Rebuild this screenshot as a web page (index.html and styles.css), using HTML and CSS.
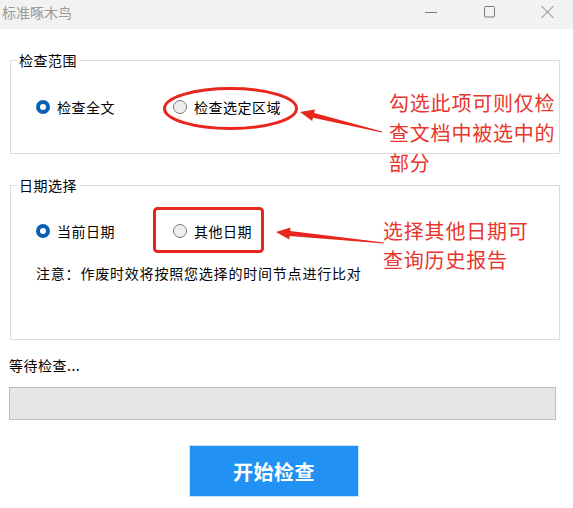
FILE: index.html
```html
<!DOCTYPE html>
<html lang="zh-CN">
<head>
  <meta charset="UTF-8" />
  <meta name="viewport" content="width=device-width, initial-scale=1.0"/>
  <title>标准啄木鸟</title>
  <link rel="stylesheet" href="styles.css">
</head>
<body>

  <div class="window">
    <div class="titlebar">
      <span class="title">标准啄木鸟</span>
      <div class="win-controls">
        <svg class="win-btn" width="14" height="14" viewBox="0 0 14 14"><path d="M1 7.5h12" stroke="#7a7a7a" stroke-width="1"/></svg>
        <svg class="win-btn" width="14" height="14" viewBox="0 0 14 14"><rect x="2.5" y="1.5" width="10" height="10.5" rx="1" fill="none" stroke="#7a7a7a" stroke-width="1"/></svg>
        <svg class="win-btn" width="14" height="14" viewBox="0 0 14 14"><path d="M1.5 1l12 12M13.5 1l-12 12" stroke="#7a7a7a" stroke-width="1"/></svg>
      </div>
    </div>

    <div class="content">
      <fieldset class="group group-range">
        <legend>检查范围</legend>
        <div class="group-body">
          <div class="options">
            <label class="option"><span class="radio checked"></span>检查全文</label>
            <label class="option"><span class="radio"></span>检查选定区域</label>
          </div>
        </div>
      </fieldset>

      <fieldset class="group group-date">
        <legend>日期选择</legend>
        <div class="group-body">
          <div class="options">
            <label class="option"><span class="radio checked"></span>当前日期</label>
            <label class="option"><span class="radio"></span>其他日期</label>
          </div>
          <p class="hint">注意：作废时效将按照您选择的时间节点进行比对</p>
        </div>
      </fieldset>

      <div class="status">等待检查...</div>
      <div class="progress"></div>
      <button class="start">开始检查</button>
    </div>

    <!-- annotation marks drawn over the dialog -->
    <svg class="marks" width="573" height="508" viewBox="0 0 573 508">
      <ellipse cx="230.5" cy="108.5" rx="66" ry="20" fill="none" stroke="#e8261e" stroke-width="3"/>
      <rect x="154.5" y="208.5" width="108" height="43" rx="3" fill="none" stroke="#e8261e" stroke-width="3"/>
      <polygon fill="#e8261e" points="300,112 315,109.5 314.2,112.9 382.1,131.5 381.9,132.5 313,117.7 312.2,121.1"/>
      <polygon fill="#e8261e" points="276,232 290.5,227.4 290.2,230.9 384,242.5 384,243.5 289.6,235.9 289.3,239.4"/>
    </svg>
    <div class="note note-range">勾选此项可则仅检<br>查文档中被选中的<br>部分</div>
    <div class="note note-date">选择其他日期可<br>查询历史报告</div>
  </div>

</body>
</html>
```

FILE: styles.css
```css
body {
  margin: 0;
  background: #fff;
  font-family: "Noto Sans CJK SC", "Microsoft YaHei", sans-serif;
  color: #000;
}
.window {
  position: relative;
  width: 573px;
  height: 508px;
  overflow: hidden;
  background: #fff;
}
.titlebar {
  height: 29px;
  background: #f2f2f2;
  display: flex;
  align-items: center;
  justify-content: space-between;
}
.title {
  font-size: 14px;
  color: #999;
  margin-left: 2px;
  margin-top: -5px;
}
.win-controls {
  display: flex;
  gap: 44px;
  margin-right: 19px;
  margin-top: -6px;
}
.win-btn {
  display: block;
}
.content {
  padding-top: 21px;
}
.group {
  margin: 0 13px 0 10px;
  border: 1px solid #dcdcdc;
  padding: 0;
  min-width: 0;
}
.group legend {
  font-size: 14px;
  line-height: 20px;
  padding: 0 2px;
  margin-left: 6px;
  letter-spacing: 0.5px;
}
.group-body {
  padding-left: 25px;
}
.group-range .group-body {
  padding-top: 27px;
  padding-bottom: 36px;
}
.group-date {
  margin-top: 21px;
}
.group-date .group-body {
  padding-top: 26px;
}
.options {
  display: flex;
}
.option {
  width: 137px;
  flex: none;
  display: flex;
  align-items: center;
  gap: 7px;
  font-size: 14px;
  line-height: 20px;
  letter-spacing: 0.5px;
}
.radio {
  width: 14px;
  height: 14px;
  box-sizing: border-box;
  border-radius: 50%;
  border: 1px solid #7a7a7a;
  background: #eee;
  flex: none;
}
.radio.checked {
  border: 4px solid #0a5fb4;
  background: #fff;
}
.hint {
  margin: 22px 0 0 0;
  font-size: 14px;
  line-height: 20px;
  letter-spacing: 0.8px;
  height: 76px;
}
.status {
  margin: 15px 0 0 9px;
  font-size: 14px;
  line-height: 20px;
  letter-spacing: 0.5px;
}
.progress {
  margin: 12px 17px 0 9px;
  height: 33px;
  box-sizing: border-box;
  background: #e6e6e6;
  border: 1px solid #bcbcbc;
}
.start {
  display: block;
  margin: 25px 0 0 189px;
  width: 170px;
  height: 52px;
  background: #2192f4;
  border: 1px solid #bfe3fb;
  color: #fff;
  font-family: inherit;
  font-size: 20px;
  font-weight: 700;
  letter-spacing: 0.5px;
  cursor: pointer;
}
.marks {
  position: absolute;
  top: 0;
  left: 0;
  pointer-events: none;
}
.note {
  position: absolute;
  color: #e8352d;
  font-size: 20px;
  line-height: 30px;
  letter-spacing: 0.8px;
}
.note-range {
  left: 389px;
  top: 88px;
}
.note-date {
  left: 383px;
  top: 216px;
  line-height: 29px;
}
```
